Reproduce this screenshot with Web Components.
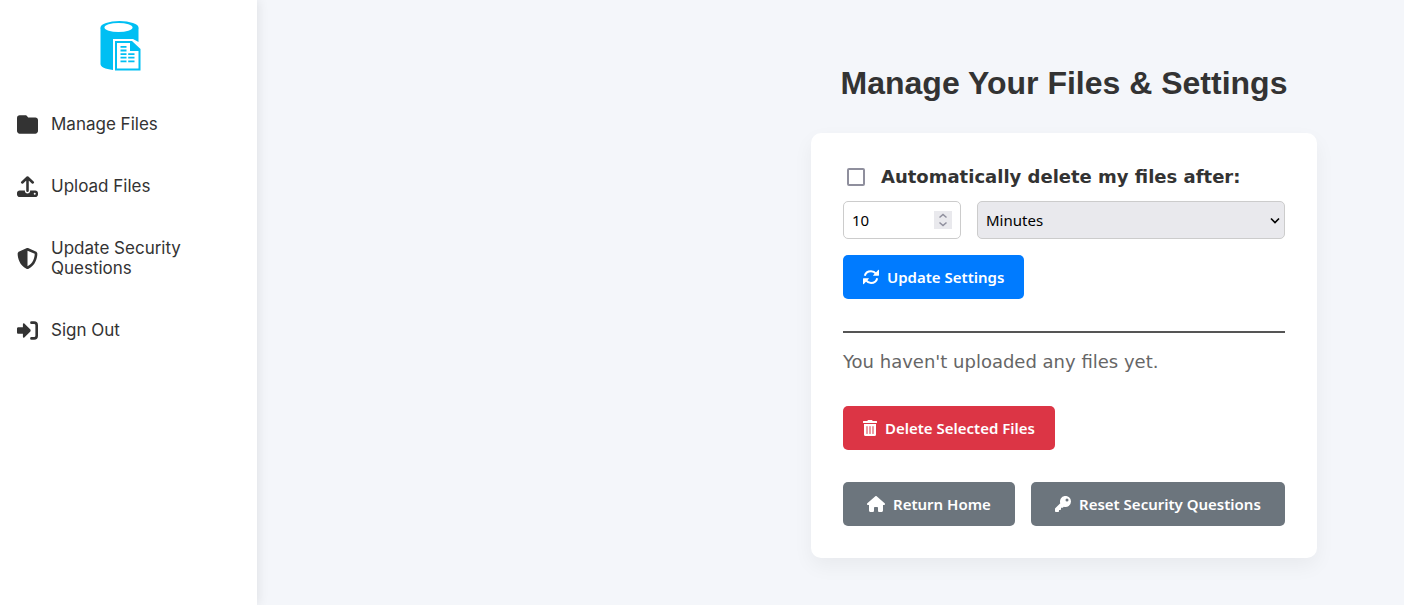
<!DOCTYPE html>
<html lang="en">
<head>
<meta charset="utf-8">
<meta name="viewport" content="width=device-width, initial-scale=1">
<title>Manage Your Files &amp; Settings</title>
<style>
body { margin: 0; background: #f4f6fa; color: #333; font-family: "DejaVu Sans", sans-serif; }
</style>
</head>
<body>
<file-app></file-app>
<script>
const define = (name, html, setup) => {
  const template = document.createElement('template');
  template.innerHTML = html;
  customElements.define(name, class extends HTMLElement {
    constructor() {
      super();
      this.attachShadow({ mode: 'open' }).append(template.content.cloneNode(true));
    }
    connectedCallback() { if (setup) setup(this, this.shadowRoot); }
  });
};

const icons = {
  folder: ['0 0 512 512', '<path d="M64 480H448c35.3 0 64-28.7 64-64V152c0-35.3-28.7-64-64-64H288c-10.1 0-19.6-4.7-25.6-12.8L253 61C241 45 222 32 202 32H64C28.7 32 0 60.7 0 96V416c0 35.3 28.7 64 64 64z"/>'],
  upload: ['0 0 512 512', '<path d="M256 360V50M128 158 256 36 384 158" fill="none" stroke="currentColor" stroke-width="62" stroke-linecap="round" stroke-linejoin="round"/><path fill-rule="evenodd" d="M64 352H192V368C192 403 220 424 256 424S320 403 320 368V352H448C483 352 512 381 512 416V448C512 483 483 512 448 512H64C29 512 0 483 0 448V416C0 381 29 352 64 352ZM432 408A24 24 0 1 0 432 456A24 24 0 1 0 432 408Z"/>'],
  shield: ['0 0 512 512', '<path fill-rule="evenodd" d="M256 0c4.6 0 9.2 1 13.4 2.9L457.7 82.8c22 9.3 38.4 31 38.3 57.2c-.5 99.2-41.3 280.7-213.6 363.2c-16.7 8-36.1 8-52.8 0C57.3 420.7 16.5 239.2 16 140c-.1-26.2 16.3-47.9 38.3-57.2L242.7 2.9C246.8 1 251.4 0 256 0zm0 66.8V444.8C394 378 431.100 230.100 432 141.400L256 66.800z"/>'],
  signout: ['0 0 512 512', '<path d="M320 224 178 88C163 74 144 84 144 104V176H32C14 176 0 190 0 208V304C0 322 14 336 32 336H144V408C144 428 163 438 178 424L320 288C338 270 338 242 320 224Z"/><path d="M352 64H416C452 64 480 92 480 128V384C480 420 452 448 416 448H352" fill="none" stroke="currentColor" stroke-width="64" stroke-linecap="round"/>'],
  refresh: ['0 0 512 512', '<path d="M58 218C78 126 160 68 256 68C322 68 378 96 415 146M454 294C434 386 352 444 256 444C190 444 134 416 97 366" fill="none" stroke="currentColor" stroke-width="64"/><path d="M500 24C508 24 512 30 512 38V202C512 212 506 218 496 218H334C322 218 318 206 326 198L486 30C490 26 494 24 500 24ZM12 488C4 488 0 482 0 474V310C0 300 6 294 16 294H178C190 294 194 306 186 314L26 482C22 486 18 488 12 488Z"/>'],
  trash: ['0 0 448 512', '<path fill-rule="evenodd" d="M32 464a48 48 0 0 0 48 48h288a48 48 0 0 0 48-48V128H32zm272-256a16 16 0 0 1 32 0v224a16 16 0 0 1-32 0zm-96 0a16 16 0 0 1 32 0v224a16 16 0 0 1-32 0zm-96 0a16 16 0 0 1 32 0v224a16 16 0 0 1-32 0zM432 32H312l-9.400-18.700A24 24 0 0 0 281.100 0H166.800a23.700 23.700 0 0 0-21.400 13.300L136 32H16A16 16 0 0 0 0 48v32a16 16 0 0 0 16 16h416a16 16 0 0 0 16-16V48a16 16 0 0 0-16-16z"/>'],
  home: ['0 0 576 512', '<path d="M575.800 255.500c0 18-15 32.100-32 32.100H511.800V464c0 26.500-21.500 48-48 48H392c-22.100 0-40-17.900-40-40V384c0-17.700-14.300-32-32-32H256c-17.700 0-32 14.300-32 32v88c0 22.100-17.900 40-40 40H112.100c-26.500 0-48-21.500-48-48V287.600H32c-18 0-32-14-32-32.100c0-9 3-17 10-24L266.400 8c7-7 15-8 22-8s15 2 21 7L564.800 231.500c8 7 12 15 11 24z"/>'],
  key: ['0 0 512 512', '<path fill-rule="evenodd" d="M512 176A176 176 0 0 1 281.700 343.500L257 371C252 376 246 379 239 379H192V427C192 440 182 451 168 451H128V488C128 501 117 512 104 512H24C11 512 0 501 0 488V408C0 402 3 396 7 391L169 230A176 176 0 1 1 512 176ZM336 128A48 48 0 1 0 432 128A48 48 0 1 0 336 128Z"/>'],
  logo: ['0 0 42 50', '<ellipse cx="19.500" cy="6.500" rx="19" ry="6.500"/><path d="M.5 7H38.500V21L33 18H13V49C5 48 .5 46 .5 43Z"/><ellipse cx="18.500" cy="6.500" rx="14" ry="4.500" fill="#fff"/><path d="M13.500 18.500H32L41 26V50H13.500Z" fill="#fff"/><path fill-rule="evenodd" d="M15 20H32L40.500 28V49.500H15ZM17 22V47.500H38.500V30H30V22Z"/><path d="M20.500 25h6v1.800h-6zM20.500 28.600h6v1.800h-6zM20.500 32.200h6v1.800h-6zM20.500 35.800h6v1.800h-6zM20.500 39.400h6v1.800h-6zM28.200 32.200h6.300v1.800h-6.300zM28.200 35.800h6.300v1.800h-6.300zM28.200 39.400h6.300v1.800h-6.300z"/>']
};

define('app-icon', `
<style>
:host { display: block; flex: none; width: 16px; height: 16px; }
svg { display: block; width: 100%; height: 100%; fill: currentColor; }
</style>
<svg aria-hidden="true"></svg>`, (el, root) => {
  const [box, shape] = icons[el.getAttribute('name')];
  const svg = root.querySelector('svg');
  svg.setAttribute('viewBox', box);
  svg.innerHTML = shape;
});

define('nav-item', `
<style>
:host { display: block; }
a { display: flex; align-items: center; gap: 13px; padding: 16px 17px; color: #333; text-decoration: none;
  font: 17px/20px Inter, sans-serif; }
::slotted(app-icon) { width: 21px; height: 21px; margin: -1px 0; }
</style>
<a href="#"><slot name="icon"></slot><span><slot></slot></span></a>`);

define('side-bar', `
<style>
:host { display: block; box-sizing: border-box; width: 257px; padding-top: 21px; background: #fff; box-shadow: 2px 0 10px rgba(0, 0, 0, .08); }
.logo { width: 42px; height: 50px; margin: 0 100px 27px; color: #00bff3; }
nav { display: grid; gap: 10px; }
</style>
<app-icon class="logo" name="logo"></app-icon>
<nav>
  <nav-item><app-icon slot="icon" name="folder"></app-icon>Manage Files</nav-item>
  <nav-item><app-icon slot="icon" name="upload"></app-icon>Upload Files</nav-item>
  <nav-item><app-icon slot="icon" name="shield"></app-icon>Update Security Questions</nav-item>
  <nav-item><app-icon slot="icon" name="signout"></app-icon>Sign Out</nav-item>
</nav>`);

define('action-button', `
<style>
:host { display: inline-flex; --bg: #6c757d; --pad: 24px; }
:host([kind="primary"]) { --bg: #007bff; --pad: 20px; }
:host([kind="danger"]) { --bg: #dc3545; --pad: 20px; }
button { display: flex; flex: 1; align-items: center; justify-content: center; gap: 8px; height: 44px; padding: 0 var(--pad);
  border: 0; border-radius: 5px; background: var(--bg); color: #fff; font: 600 15px/24px "Noto Sans", sans-serif; white-space: nowrap; cursor: pointer; }
</style>
<button type="button"><slot name="icon"></slot><slot></slot></button>`);

define('settings-form', `
<style>
:host { display: block; }
.toggle { display: flex; align-items: center; gap: 16px; height: 24px; margin-bottom: 12px; padding-left: 4px; }
.toggle input { appearance: none; flex: none; width: 18px; height: 18px; margin: 0; border: 2px solid #8f8f9d; border-radius: 2px; background: #fff; }
.toggle input:checked { background: #007bff; }
label { font-weight: 700; font-size: 18px; line-height: 24px; white-space: nowrap; }
.fields { display: grid; grid-template-columns: 118px 1fr; gap: 16px; margin-bottom: 16px; }
.field { position: relative; display: grid; }
.field input, select { appearance: textfield; box-sizing: border-box; width: 100%; height: 38px; margin: 0; padding: 0 8px; border: 1px solid #ccc; border-radius: 5px;
  background: #fff; color: #000; font: 15px/24px "Noto Sans", sans-serif; }
.field select { appearance: none; background: #e9e9ed; }
input::-webkit-inner-spin-button { appearance: none; margin: 0; }
.spin, .arrow { position: absolute; top: 10px; right: 9px; width: 18px; height: 18px; pointer-events: none; fill: none; }
.spin { background: #e9e9ed; stroke: #8f8f9d; stroke-width: 1.5; }
.arrow { right: 1px; stroke: #000; stroke-width: 1.6; }
</style>
<div class="toggle"><input id="auto" type="checkbox"><label for="auto">Automatically delete my files after:</label></div>
<div class="fields">
  <div class="field"><input type="number" value="10" min="1" aria-label="Amount of time">
    <svg class="spin" viewBox="0 0 18 18" aria-hidden="true"><path d="m5.500 6.500 3.500-3 3.500 3M5.500 11.500l3.500 3 3.500-3"/></svg></div>
  <div class="field"><select aria-label="Unit of time"><option>Minutes</option><option>Hours</option><option>Days</option></select>
    <svg class="arrow" viewBox="0 0 18 18" aria-hidden="true"><path d="m5 7.500 4 4 4-4"/></svg></div>
</div>
<action-button kind="primary"><app-icon slot="icon" name="refresh"></app-icon>Update Settings</action-button>`);

define('settings-card', `
<style>
:host { display: block; box-sizing: border-box; width: 100%; padding: 32px; border-radius: 10px; background: #fff; box-shadow: 0 8px 20px rgba(0, 0, 0, .05); }
settings-form { padding-bottom: 32px; border-bottom: 2px solid #555; }
p { margin: 16px 0 31px; color: #666; font-size: 18px; line-height: 26px; }
.trash { width: 14px; }
.home { width: 18px; }
.row { display: flex; gap: 16px; margin-top: 32px; }
.row > :last-child { flex: 1; }
.danger { display: flex; width: fit-content; }
</style>
<settings-form></settings-form>
<p>You haven't uploaded any files yet.</p>
<action-button class="danger" kind="danger"><app-icon slot="icon" class="trash" name="trash"></app-icon>Delete Selected Files</action-button>
<div class="row">
  <action-button><app-icon slot="icon" class="home" name="home"></app-icon>Return Home</action-button>
  <action-button><app-icon slot="icon" name="key"></app-icon>Reset Security Questions</action-button>
</div>`);

define('file-app', `
<style>
:host { display: flex; min-height: 100vh; }
side-bar { flex: none; }
main { display: flex; flex: 1; flex-direction: column; align-items: center; box-sizing: border-box; min-width: 0; padding: 65px 0 32px 467px; }
h1 { margin: 0 0 31px; font: 700 32px/37px "Liberation Sans", sans-serif; white-space: nowrap; }
settings-card { max-width: 506px; }
</style>
<side-bar></side-bar>
<main><h1>Manage Your Files &amp; Settings</h1><settings-card></settings-card></main>`);
</script>
</body>
</html>
